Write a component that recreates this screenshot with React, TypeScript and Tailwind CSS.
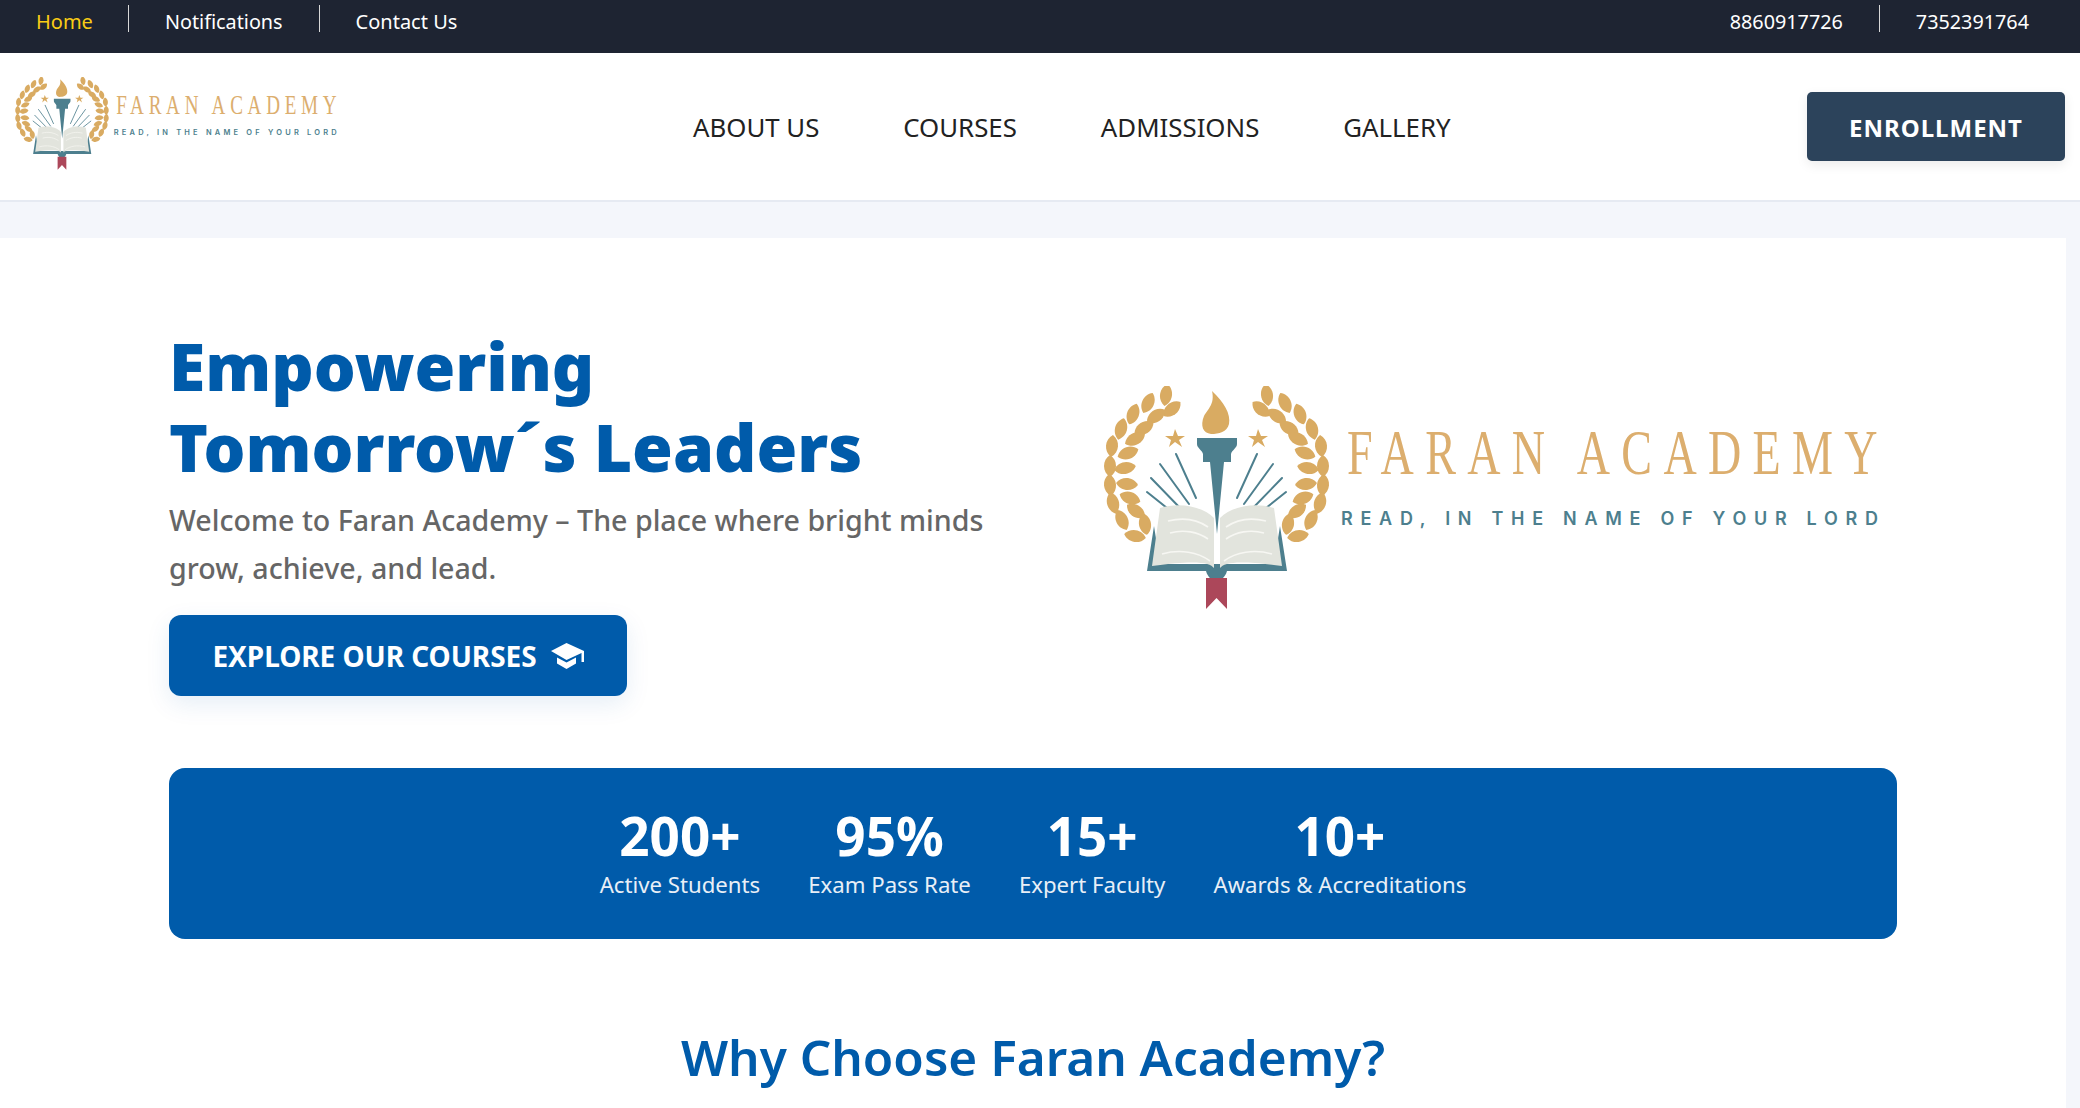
const sans = 'font-["Noto_Sans","Open_Sans",sans-serif]';

// leaf centres of the left branch, mirrored for the right one
const leaves = [
  [65, 9, 8], [71, 23, 50], [47, 17, 25], [55, 30, 55], [32, 28, 20], [43, 42, 60],
  [20, 43, 15], [34, 53, 65], [11, 60, 5], [27, 67, 70], [9, 80, 0], [24, 82, 80],
  [9, 99, -5], [26, 98, 95], [12, 117, -15], [29, 112, 110], [21, 134, -25], [35, 125, 125],
  [44, 138, -10], [34, 150, 100],
];
const rays = [
  [72, 68, 92, 112], [56, 78, 85, 118], [47, 92, 78, 124], [43, 106, 73, 130],
];
const leaf = 'M0 -11 C8 -6 8 6 0 11 C-8 6 -8 -6 0 -11Z';

function Logo({ className }: { className: string }) {
  return (
    <svg viewBox="0 0 780 226" className={className}>
      {leaves.map(([x, y, r]) => (
        <g key={`${x}-${y}`}>
          <path d={leaf} fill="#d9ab62" transform={`translate(${x} ${y}) rotate(${r})`} />
          <path d={leaf} fill="#d9ab62" transform={`translate(${231 - x} ${y}) rotate(${-r})`} />
        </g>
      ))}
      <g transform="translate(3 0)">
        <path d="M108 5 C120 16 127 28 125 38 C123 46 115 48 107 48 C99 47 96 40 100 30 C104 23 111 18 108 5Z" fill="#d9ab62" />
        <path d="M72 47 L75 54 L82 54 L76 58 L79 65 L72 60 L66 65 L68 58 L62 54 L70 54Z" fill="#d9ab62" transform="translate(-1 -4)" />
        <path d="M153 47 L156 54 L163 54 L157 58 L160 65 L153 60 L147 65 L149 58 L143 54 L151 54Z" fill="#d9ab62" transform="translate(1 -4)" />
        <path d="M93 52 H133 V58 C133 62 128 64 127 68 V76 H120 L113 148 L106 76 H99 V68 C98 64 93 62 93 58Z" fill="#4d7f8e" />
        {rays.map(([x1, y1, x2, y2]) => (
          <g key={x1} stroke="#4d7f8e" strokeWidth="2" strokeLinecap="round">
            <line x1={x1} y1={y1} x2={x2} y2={y2} />
            <line x1={225 - x1} y1={y1} x2={225 - x2} y2={y2} />
          </g>
        ))}
        <path d="M50 140 L43 185 H102 C104 192 108 194 112 194 C117 194 121 192 123 185 H183 L176 140 L170 178 H56Z" fill="#4d7f8e" />
        <path d="M56 122 C75 116 98 120 110 132 V182 C106 176 90 174 48 180Z" fill="#e2e4dd" />
        <path d="M170 122 C151 116 128 120 116 132 V182 C120 176 136 174 178 180Z" fill="#e2e4dd" />
        <g fill="none" stroke="#f7f7f3" strokeWidth="1.6">
          <path d="M64 135 C80 131 94 134 104 141" />
          <path d="M66 147 C80 143 94 146 104 153" />
          <path d="M58 168 C76 163 94 166 106 175" />
          <path d="M162 135 C146 131 132 134 122 141" />
          <path d="M160 147 C146 143 132 146 122 153" />
          <path d="M168 168 C150 163 132 166 120 175" />
        </g>
        <path d="M102 192 L123 192 V223 L112.500 212 L102 223Z" fill="#ac475a" />
      </g>
      <g transform="translate(246 88) scale(0.72 1)">
        <text x="0" y="0" textLength="737" lengthAdjust="spacing" fontFamily="'Liberation Serif', serif" fontSize="64" fill="#dcae6e">
          FARAN ACADEMY
        </text>
      </g>
      <text x="240" y="139" textLength="537" lengthAdjust="spacing" fontFamily="Inter, sans-serif" fontWeight="600" fontSize="18" fill="#4d7f8e">
        READ, IN THE NAME OF YOUR LORD
      </text>
    </svg>
  );
}

function TopBar() {
  return (
    <div className="flex h-[53px] items-start justify-between bg-[#1e2432] text-[20px] leading-[27px] text-white">
      <div className="flex pt-[5px]">
        <a className="border-r border-[#d8d8d8] pl-[36px] pr-[35px] text-[#facc15]">
          <span className="relative top-[3px]">Home</span>
        </a>
        <a className="border-r border-[#d8d8d8] px-[36px]">
          <span className="relative top-[3px] text-[19.800px]">Notifications</span>
        </a>
        <a className="px-[36px]">
          <span className="relative top-[3px]">Contact Us</span>
        </a>
      </div>
      <div className="flex pt-[5px] text-[19.800px]">
        <a className="border-r border-[#d8d8d8] pl-[36px] pr-[36px]">
          <span className="relative top-[3px]">8860917726</span>
        </a>
        <a className="px-[36px] pr-[51px]">
          <span className="relative top-[3px]">7352391764</span>
        </a>
      </div>
    </div>
  );
}

function Header() {
  return (
    <header className="flex h-[149px] items-center border-b-2 border-[#e6eaf2] bg-white pr-[15px]">
      <div className="mb-[6px] ml-[14px] w-[324px]">
        <Logo className="h-[94px] w-[324px]" />
      </div>
      <nav className="ml-[355px] flex gap-[84px] pt-[2px] text-[25.800px] text-[#222]">
        <a>ABOUT US</a>
        <a>COURSES</a>
        <a>ADMISSIONS</a>
        <a>GALLERY</a>
      </nav>
      <button className="ml-auto h-[69px] w-[258px] rounded-[5px] bg-[#2c435b] pt-[2px] text-[24px] font-bold tracking-[1px] text-white shadow-[0_4px_12px_rgba(0,0,0,0.08)]">
        ENROLLMENT
      </button>
    </header>
  );
}

const stats = [
  { value: '200+', label: 'Active Students' },
  { value: '95%', label: 'Exam Pass Rate' },
  { value: '15+', label: 'Expert Faculty' },
  { value: '10+', label: 'Awards & Accreditations' },
];

function Hero() {
  return (
    <section className="flex items-start justify-between">
      <div className="w-[860px]">
        <h1 className="text-[66px] font-black leading-[81px] text-[#005baa]">
          Empowering
          <br />
          Tomorrow´s Leaders
        </h1>
        <p className="mt-[9px] text-[28.600px] font-medium leading-[48px] text-[#666]">
          Welcome to Faran Academy – The place where bright minds grow, achieve, and lead.
        </p>
        <button className="mt-[23px] flex h-[81px] w-[458px] items-center justify-center gap-[14px] rounded-[12px] bg-[#005baa] text-[28px] font-bold tracking-[-0.050px] text-white shadow-[0_8px_24px_rgba(0,91,170,0.1)]">
          EXPLORE OUR COURSES
          <svg viewBox="0 0 33 26" className="h-[26px] w-[33px]" fill="white">
            <path d="M15.500 0 L33 8 V19 H30.500 V10 L15.500 17 L0 8Z" />
            <path d="M6 14.500 L15.500 19.500 L25 14.500 V20.500 L15.500 26 L6 20.500Z" />
          </svg>
        </button>
      </div>
      <div className="mr-[16px] mt-[61px]">
        <Logo className="h-[226px] w-[780px]" />
      </div>
    </section>
  );
}

export default function App() {
  return (
    <div className={`${sans} flex h-screen flex-col overflow-hidden bg-[#f4f6fb]`}>
      <TopBar />
      <Header />
      <main className="mr-[14px] mt-[36px] flex-1 bg-white pl-[169px] pr-[169px] pt-[87px]">
        <Hero />
        <section className="mt-[72px] flex h-[171px] items-center justify-center gap-[48px] rounded-[16px] bg-[#005baa] text-center text-white">
          {stats.map((stat) => (
            <div key={stat.label}>
              <div className="text-[53px] font-bold leading-[62px]">{stat.value}</div>
              <div className="pt-[1px] text-[22.200px] leading-[34px] text-[#e8eff7]">{stat.label}</div>
            </div>
          ))}
        </section>
        <h2 className="mt-[78px] text-center text-[49.500px] font-semibold leading-[80px] text-[#005baa]">
          Why Choose Faran Academy?
        </h2>
      </main>
    </div>
  );
}
